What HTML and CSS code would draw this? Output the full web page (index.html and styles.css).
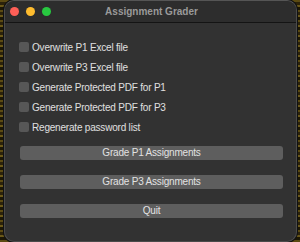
FILE: index.html
```html
<!DOCTYPE html>
<html>
<head>
<meta charset="utf-8">
<link rel="stylesheet" href="styles.css">
</head>
<body>
<div class="window">
  <div class="titlebar">
    <div class="lights">
      <span class="light red"></span>
      <span class="light yellow"></span>
      <span class="light green"></span>
    </div>
    <div class="title">Assignment Grader</div>
  </div>
  <div class="content">
    <div class="options">
      <label class="row"><span class="box"></span><span class="label">Overwrite P1 Excel file</span></label>
      <label class="row"><span class="box"></span><span class="label">Overwrite P3 Excel file</span></label>
      <label class="row"><span class="box"></span><span class="label">Generate Protected PDF for P1</span></label>
      <label class="row"><span class="box"></span><span class="label">Generate Protected PDF for P3</span></label>
      <label class="row"><span class="box"></span><span class="label">Regenerate password list</span></label>
    </div>
    <div class="buttons">
      <button class="btn">Grade P1 Assignments</button>
      <button class="btn">Grade P3 Assignments</button>
      <button class="btn">Quit</button>
    </div>
  </div>
</div>
</body>
</html>
```
FILE: styles.css
```css
html, body {
  margin: 0;
  padding: 0;
  width: 300px;
  height: 242px;
  overflow: hidden;
}
body {
  background: repeating-linear-gradient(180deg, #5b4a12 0 2px, #2b220a 2px 5px, #6a5818 5px 7px, #1c1706 7px 10px);
  font-family: "Liberation Sans", Arial, sans-serif;
}
.window {
  margin-left: 4px;
  width: 291px;
  height: 240px;
  background: #323232;
  border: 1px solid #4b4b4b;
  border-top-color: #555;
  border-radius: 10px;
  overflow: hidden;
  box-shadow: 0 0 0 1px #111;
}
.titlebar {
  position: relative;
  height: 21px;
  background: #2d2d2d;
  border-bottom: 1px solid #141414;
  display: flex;
  align-items: center;
  justify-content: center;
}
.lights {
  position: absolute;
  left: 5px;
  top: 6px;
  display: flex;
  gap: 7px;
}
.light {
  width: 9px;
  height: 9px;
  border-radius: 50%;
  display: block;
}
.red { background: #fe5f57; }
.yellow { background: #febc2e; }
.green { background: #28c840; }
.title {
  color: #9a9a9a;
  font-size: 10px;
  font-weight: bold;
  margin-left: 2px;
}
.content {
  padding: 14px 13px 0 14px;
}
.options {
  display: flex;
  flex-direction: column;
}
.row {
  height: 20px;
  display: flex;
  align-items: center;
}
.box {
  width: 10px;
  height: 10px;
  border-radius: 2px;
  background: #575757;
  margin-right: 3px;
  flex: none;
}
.label {
  color: #e0e0e0;
  font-size: 10px;
  letter-spacing: -0.2px;
}
.buttons {
  display: flex;
  flex-direction: column;
  gap: 15px;
  padding-top: 9px;
  padding-left: 1px;
}
.btn {
  height: 14px;
  width: 263px;
  border: none;
  border-radius: 3px;
  background: #5e5e5e;
  color: #e2e2e2;
  font-family: "Liberation Sans", Arial, sans-serif;
  font-size: 10px;
  letter-spacing: -0.2px;
  padding: 0;
  line-height: 14px;
}
```
